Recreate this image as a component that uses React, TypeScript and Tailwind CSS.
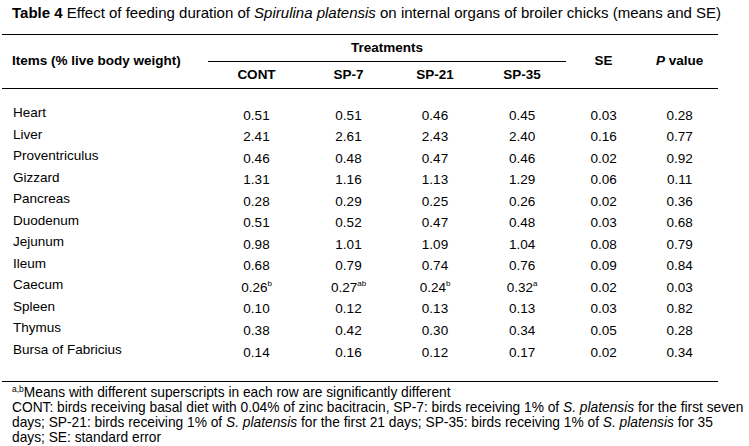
const rows: [string, string[], string, string][] = [
  ["Heart", ["0.51", "0.51", "0.46", "0.45"], "0.03", "0.28"],
  ["Liver", ["2.41", "2.61", "2.43", "2.40"], "0.16", "0.77"],
  ["Proventriculus", ["0.46", "0.48", "0.47", "0.46"], "0.02", "0.92"],
  ["Gizzard", ["1.31", "1.16", "1.13", "1.29"], "0.06", "0.11"],
  ["Pancreas", ["0.28", "0.29", "0.25", "0.26"], "0.02", "0.36"],
  ["Duodenum", ["0.51", "0.52", "0.47", "0.48"], "0.03", "0.68"],
  ["Jejunum", ["0.98", "1.01", "1.09", "1.04"], "0.08", "0.79"],
  ["Ileum", ["0.68", "0.79", "0.74", "0.76"], "0.09", "0.84"],
  ["Caecum", ["0.26^b", "0.27^ab", "0.24^b", "0.32^a"], "0.02", "0.03"],
  ["Spleen", ["0.10", "0.12", "0.13", "0.13"], "0.03", "0.82"],
  ["Thymus", ["0.38", "0.42", "0.30", "0.34"], "0.05", "0.28"],
  ["Bursa of Fabricius", ["0.14", "0.16", "0.12", "0.17"], "0.02", "0.34"],
];

function Value({ v }: { v: string }) {
  const [num, sup] = v.split("^");
  return (
    <>
      {num}
      {sup && <sup className="relative -top-[6px] text-[8px] leading-none">{sup}</sup>}
    </>
  );
}

export default function App() {
  return (
    <div className="w-[749px] h-[446px] overflow-hidden bg-white text-black font-['Liberation_Sans',Arial,sans-serif] text-[13.5px]">
      {/* Title */}
      <p className="pl-[12px] pt-[3px] h-[34px] leading-[20px] text-[15px] whitespace-nowrap">
        <b>Table 4</b> Effect of feeding duration of <i>Spirulina platensis</i> on internal organs of broiler chicks (means and SE)
      </p>

      <table className="ml-[2px] w-[716px] table-fixed border-collapse">
        <colgroup>
          <col className="w-[206px]" />
          <col className="w-[97px]" />
          <col className="w-[87px]" />
          <col className="w-[86px]" />
          <col className="w-[88px]" />
          <col className="w-[75px]" />
          <col className="w-[77px]" />
        </colgroup>
        <thead className="font-bold">
          <tr className="h-[27px] border-t border-black">
            <th rowSpan={2} className="text-left font-bold pl-[10px] align-middle border-b border-black">
              Items (% live body weight)
            </th>
            <th colSpan={4} className="text-center font-bold border-b border-black">
              Treatments
            </th>
            <th rowSpan={2} className="text-center font-bold border-b border-black">
              SE
            </th>
            <th rowSpan={2} className="text-center font-bold border-b border-black">
              <i>P</i> value
            </th>
          </tr>
          <tr className="h-[27px]">
            <th className="font-bold border-b border-black">CONT</th>
            <th className="font-bold border-b border-black">SP-7</th>
            <th className="font-bold border-b border-black">SP-21</th>
            <th className="font-bold border-b border-black">SP-35</th>
          </tr>
        </thead>
        <tbody>
          <tr className="h-[15px]">
            <td colSpan={7} />
          </tr>
          {rows.map(([label, treatments, se, p]) => (
            <tr key={label} className="h-[21.55px]">
              <td className="pl-[11px] pb-[3px] leading-none">{label}</td>
              {treatments.map((t, i) => (
                <td key={i} className="text-center leading-none pt-[2px]">
                  <Value v={t} />
                </td>
              ))}
              <td className="text-center leading-none pt-[2px]">{se}</td>
              <td className="text-center leading-none pt-[2px]">{p}</td>
            </tr>
          ))}
          <tr className="h-[19px] border-b border-black">
            <td colSpan={7} />
          </tr>
        </tbody>
      </table>

      {/* Footnotes */}
      <div className="pl-[12px] pt-[3px] leading-[15px] text-[13.75px] whitespace-nowrap">
        <p>
          <sup className="text-[8.5px] leading-none relative -top-[5px]">a,b</sup>Means with different superscripts in each row are significantly different
        </p>
        <p>
          CONT: birds receiving basal diet with 0.04% of zinc bacitracin, SP-7: birds receiving 1% of <i>S. platensis</i> for the first seven
        </p>
        <p>
          days; SP-21: birds receiving 1% of <i>S. platensis</i> for the first 21 days; SP-35: birds receiving 1% of <i>S. platensis</i> for 35
        </p>
        <p>days; SE: standard error</p>
      </div>
    </div>
  );
}
